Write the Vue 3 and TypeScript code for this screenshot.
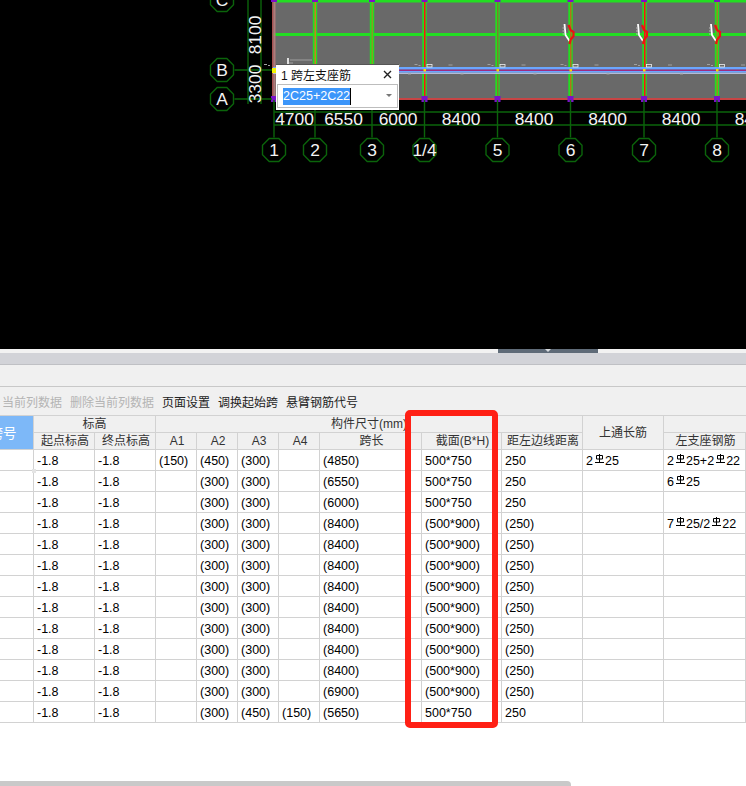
<script setup lang="ts">
interface Row {
  a1?: string
  a2?: string
  a3?: string
  a4?: string
  span: string
  section: string
  edge: string
  top?: string
  left?: string
}

const xs = [274, 315, 372, 424.5, 497.5, 570.5, 644, 717]
const axisLabels = ['1', '2', '3', '1/4', '5', '6', '7', '8']
const dims = [
  { x: 294.5, t: '4700' },
  { x: 343.5, t: '6550' },
  { x: 398, t: '6000' },
  { x: 461, t: '8400' },
  { x: 534, t: '8400' },
  { x: 607.5, t: '8400' },
  { x: 681, t: '8400' },
  { x: 754, t: '8400' },
]
const beamLines = [
  { x: 315, mid: '#c8801c' },
  { x: 372, mid: '#8a9a22' },
  { x: 424.5, mid: '#ff1010' },
  { x: 497.5, mid: '#7c7a30' },
  { x: 570.5, mid: '#b86a1c' },
  { x: 644.5, mid: '#ff1010' },
  { x: 717, mid: '#9a8a20' },
]

function bubble(cx: number, cy: number): string {
  const pts: string[] = []
  for (let i = 0; i < 8; i++) {
    const a = (Math.PI / 4) * i + Math.PI / 8
    pts.push(`${(cx + 12.5 * Math.cos(a)).toFixed(1)},${(cy + 12.5 * Math.sin(a)).toFixed(1)}`)
  }
  return pts.join(' ')
}

const rows: Row[] = [
  { a1: '(150)', a2: '(450)', a3: '(300)', span: '(4850)', section: '500*750', edge: '250', top: '2C25', left: '2C25+2C22' },
  { a2: '(300)', a3: '(300)', span: '(6550)', section: '500*750', edge: '250', left: '6C25' },
  { a2: '(300)', a3: '(300)', span: '(6000)', section: '500*750', edge: '250' },
  { a2: '(300)', a3: '(300)', span: '(8400)', section: '(500*900)', edge: '(250)', left: '7C25/2C22' },
  ...Array.from({ length: 7 }, () => ({ a2: '(300)', a3: '(300)', span: '(8400)', section: '(500*900)', edge: '(250)' })),
  { a2: '(300)', a3: '(300)', span: '(6900)', section: '(500*900)', edge: '(250)' },
  { a2: '(300)', a3: '(450)', a4: '(150)', span: '(5650)', section: '500*750', edge: '250' },
]
</script>

<template>
  <div class="page">
    <div class="canvas">
      <svg class="drawing" viewBox="0 0 746 349" width="746" height="349">
        <rect x="273" y="0" width="473" height="100" fill="#696969" />
        <!-- beams -->
        <rect x="273" y="0" width="473" height="2.5" fill="#22dd22" />
        <rect x="273" y="33" width="473" height="3" fill="#22dd22" />
        <g v-for="b in beamLines" :key="b.x">
          <rect :x="b.x - 2.2" y="0" width="4.4" height="99" fill="#22dd22" />
          <rect :x="b.x - 0.5" y="0" width="1.5" height="99" :fill="b.mid" />
        </g>
        <rect x="272" y="0" width="1.5" height="100" fill="#a85050" />
        <rect x="273.5" y="0" width="2" height="100" fill="#b07a7a" />
        <!-- band at axis B -->
        <rect x="273" y="67" width="473" height="2.6" fill="#6aa6ff" />
        <rect x="273" y="69.6" width="473" height="1.4" fill="#a02a80" />
        <rect x="273" y="71" width="473" height="1.7" fill="#6aa6ff" />
        <rect x="273" y="72.7" width="473" height="1.3" fill="#b4bad6" />
        <rect x="273" y="98" width="473" height="2" fill="#c84444" />
        <!-- column marks -->
        <g v-for="x in xs" :key="'c' + x">
          <rect :x="x - 3" y="0" width="6" height="2" fill="#7a10c8" />
          <rect :x="x - 3" y="96" width="6" height="6" fill="#7a10c8" />
          <rect :x="x - 1" y="69" width="2.5" height="2.5" fill="#ffd800" />
          <rect :x="x + 2.5" y="64.5" width="5" height="2.5" fill="none" stroke="#f0f0f0" stroke-width="0.8" />
          <path :d="`M${x - 10} 64.5h3M${x - 6} 65.5h2M${x + 24} 65h4M${x + 36} 74h3`" stroke="#a0a0a0" stroke-width="1" fill="none" />
        </g>
        <g v-for="x in [570.5, 644, 717]" :key="'h' + x">
          <path :d="`M${x - 6} 24 L${x - 5} 35 L${x - 1} 41`" stroke="#fff" stroke-width="1.8" fill="none" />
          <path :d="`M${x - 2} 25 L${x} 30 L${x + 3} 32 L${x + 3} 36 L${x} 40 L${x - 1} 44`" stroke="#f01010" stroke-width="2.2" fill="none" />
          <path :d="`M${x - 8} 28h2M${x - 8} 31h2M${x - 8} 34h2`" stroke="#b8b8b8" stroke-width="1" fill="none" />
        </g>
        <path d="M290 60h22M287 63h6" stroke="#a0a0a0" stroke-width="1" fill="none" />
        <rect x="287" y="58" width="2" height="6" fill="#e0e0e0" />
        <rect x="272" y="68" width="5" height="5" fill="#f4f400" />
        <!-- axis lines -->
        <g stroke="#0b640b" stroke-width="1.4" fill="none">
          <path d="M274 112H746M274 125H746" />
          <path d="M248 0V104M261 0V104" />
          <path d="M234.5 70H272M234.5 99H272" />
          <path v-for="x in xs" :key="'l' + x" :d="`M${x} 100V137.5`" />
          <polygon v-for="x in xs" :key="'b' + x" :points="bubble(x, 150)" />
          <polygon :points="bubble(222, 70)" />
          <polygon :points="bubble(222, 99)" />
          <polygon :points="bubble(222, 0)" />
        </g>
        <!-- labels -->
        <g class="cad-text">
          <text v-for="d in dims" :key="d.x" :x="d.x" y="124.5">{{ d.t }}</text>
          <text transform="translate(261 35) rotate(-90)">8100</text>
          <text transform="translate(261 84) rotate(-90)">3300</text>
          <text v-for="(label, i) in axisLabels" :key="label" :x="xs[i]" y="156">{{ label }}</text>
          <text x="222" y="76">B</text>
          <text x="222" y="105">A</text>
          <text x="222" y="6">C</text>
        </g>
      </svg>

      <div class="popup">
        <div class="popup-title">
          <span>1 跨左支座筋</span>
          <svg class="popup-close" viewBox="0 0 9 9" width="9" height="9">
            <path d="M1 1l7 7M8 1l-7 7" stroke="#222" stroke-width="1.4" />
          </svg>
        </div>
        <div class="popup-input">
          <span class="selected">2C25+2C22</span>
          <span class="caret" />
          <span class="arrow" />
        </div>
      </div>
    </div>

    <div class="splitter">
      <div class="splitter-handle"><span class="splitter-tip" /></div>
    </div>
    <div class="tabs-bar" />
    <div class="ribbon" />

    <div class="toolbar">
      <span class="tool off clipped">当前列数据</span>
      <span class="tool off">删除当前列数据</span>
      <span class="tool">页面设置</span>
      <span class="tool">调换起始跨</span>
      <span class="tool">悬臂钢筋代号</span>
    </div>

    <div class="grid-wrap">
      <table class="grid">
        <colgroup>
          <col class="c-no" />
          <col class="c-h" /><col class="c-h" />
          <col class="c-a" /><col class="c-a" /><col class="c-a" /><col class="c-a" />
          <col class="c-span" />
          <col class="c-sec" />
          <col class="c-edge" />
          <col class="c-top" />
          <col class="c-left" />
          <col class="c-next" />
        </colgroup>
        <thead>
          <tr>
            <th rowspan="2" class="no-head">跨号</th>
            <th colspan="2">标高</th>
            <th colspan="7">构件尺寸(mm)</th>
            <th rowspan="2">上通长筋</th>
            <th colspan="2" />
          </tr>
          <tr class="sub-head">
            <th>起点标高</th>
            <th>终点标高</th>
            <th>A1</th>
            <th>A2</th>
            <th>A3</th>
            <th>A4</th>
            <th>跨长</th>
            <th>截面(B*H)</th>
            <th>距左边线距离</th>
            <th>左支座钢筋</th>
            <th />
          </tr>
        </thead>
        <tbody>
          <tr v-for="(row, i) in rows" :key="i">
            <td :class="{ 'first-cell': i === 0 }" />
            <td>-1.8</td>
            <td>-1.8</td>
            <td>{{ row.a1 }}</td>
            <td>{{ row.a2 }}</td>
            <td>{{ row.a3 }}</td>
            <td>{{ row.a4 }}</td>
            <td>{{ row.span }}</td>
            <td>{{ row.section }}</td>
            <td>{{ row.edge }}</td>
            <td v-for="bar in [row.top, row.left]" :key="String(bar) + i">
              <template v-if="bar">
                <template v-for="(part, k) in bar.split('C')" :key="k">
                  <svg v-if="k > 0" class="rebar" viewBox="0 0 9 9" width="9" height="9">
                    <path d="M1.5 1.5h6v3.5h-6zM4.5 0v8.5M0 8.5h9" stroke="#000" stroke-width="1" fill="none" />
                  </svg>{{ part }}
                </template>
              </template>
            </td>
            <td />
          </tr>
        </tbody>
      </table>
      <div class="highlight" />
    </div>

    <div class="bottom">
      <div class="scroll-thumb" />
    </div>
  </div>
</template>

<style scoped>
.page {
  width: 746px;
  height: 786px;
  display: flex;
  flex-direction: column;
  overflow: hidden;
  background: #fff;
  font-family: "Liberation Sans", "Noto Sans CJK SC", sans-serif;
  font-size: 12px;
  color: #222;
}

.canvas {
  position: relative;
  height: 349px;
  flex: none;
  background: #000;
  overflow: hidden;
}

.drawing {
  display: block;
}

.cad-text text {
  fill: #f4f4f4;
  font-size: 17.4px;
  font-family: "Liberation Sans", sans-serif;
  text-anchor: middle;
}

.popup {
  position: absolute;
  left: 276px;
  top: 64px;
  width: 123px;
  height: 46px;
  box-sizing: border-box;
  background: #fff;
  border-top: 1px solid #555;
  display: flex;
  flex-direction: column;
}

.popup-title {
  height: 19px;
  display: flex;
  align-items: center;
  justify-content: space-between;
  padding: 0 7px 0 5px;
  color: #111;
}

.popup-input {
  position: relative;
  height: 24px;
  margin: 0 1px;
  box-sizing: border-box;
  border: 1px solid #bdbdbd;
  display: flex;
  align-items: center;
  padding-left: 5px;
  font-size: 12.5px;
}

.selected {
  background: #3c96fa;
  color: #fff;
  line-height: 17px;
  width: 67px;
  white-space: nowrap;
}

.caret {
  width: 1px;
  height: 17px;
  background: #000;
}

.arrow {
  position: absolute;
  right: 5px;
  top: 9px;
  border-left: 3px solid transparent;
  border-right: 3px solid transparent;
  border-top: 3px solid #777;
}

.splitter {
  height: 4px;
  flex: none;
  background: #f2f2f2;
  box-sizing: border-box;
  padding-left: 498px;
}

.splitter-handle {
  width: 100px;
  height: 4px;
  background: #5f6b78;
  display: flex;
  justify-content: center;
}

.splitter-tip {
  width: 0;
  height: 0;
  border-left: 3px solid transparent;
  border-right: 3px solid transparent;
  border-top: 3px solid #d8dce0;
}

.tabs-bar {
  height: 11px;
  flex: none;
  background: #d2d3d8;
  border-bottom: 1px solid #bfc0c4;
}

.ribbon {
  height: 21px;
  flex: none;
  background: #f0f0f0;
  border-bottom: 1px solid #c8c8c8;
}

.toolbar {
  height: 28px;
  flex: none;
  box-sizing: border-box;
  background: #f0f0f0;
  display: flex;
  align-items: center;
  gap: 8px;
  padding-top: 1px;
}

.tool {
  white-space: nowrap;
  color: #222;
}

.off {
  color: #b4b4b4;
}

.clipped {
  margin-left: 2px;
}

.grid-wrap {
  position: relative;
  height: 308px;
  flex: none;
}

.grid {
  margin-left: -31px;
  table-layout: fixed;
  border-collapse: collapse;
  width: 840px;
}

.c-no { width: 64px; }
.c-h { width: 61px; }
.c-a { width: 41px; }
.c-span { width: 102px; }
.c-sec { width: 80px; }
.c-edge { width: 81px; }
.c-top { width: 81px; }
.c-left { width: 82px; }
.c-next { width: 64px; }

.grid th,
.grid td {
  box-sizing: border-box;
  border: 1px solid #d2d2d2;
  padding: 0;
  white-space: nowrap;
  overflow: hidden;
}

.grid th {
  height: 17px;
  background: #f0f0f0;
  font-weight: 400;
  color: #333;
  text-align: center;
  line-height: 16px;
}

.sub-head th {
  padding-left: 2px;
}

.grid td {
  height: 21px;
  padding: 2px 0 0 3px;
  background: #fff;
  font-size: 12.5px;
  line-height: 17px;
  color: #000;
}

.grid .no-head {
  background: #7db8f8;
  color: #fff;
  font-size: 13.5px;
  padding: 3px 0 0 3px;
}

.grid .first-cell {
  position: relative;
  overflow: visible;
}

.first-cell::after {
  content: "";
  position: absolute;
  right: -3px;
  bottom: -3px;
  width: 4px;
  height: 4px;
  background: #e4e4e4;
}

.rebar {
  vertical-align: 2px;
  margin: 0 1px 0 2px;
}

.highlight {
  position: absolute;
  left: 405px;
  top: -5px;
  width: 93px;
  height: 318px;
  box-sizing: border-box;
  border: 6px solid #ff2015;
  border-radius: 5px;
}

.bottom {
  flex: 1;
  display: flex;
  align-items: flex-end;
}

.scroll-thumb {
  width: 571px;
  height: 5px;
  background: #c9c9c9;
  border-top-right-radius: 4px;
}
</style>

<style>
html,
body {
  margin: 0;
  background: #fff;
  overflow: hidden;
}
</style>
